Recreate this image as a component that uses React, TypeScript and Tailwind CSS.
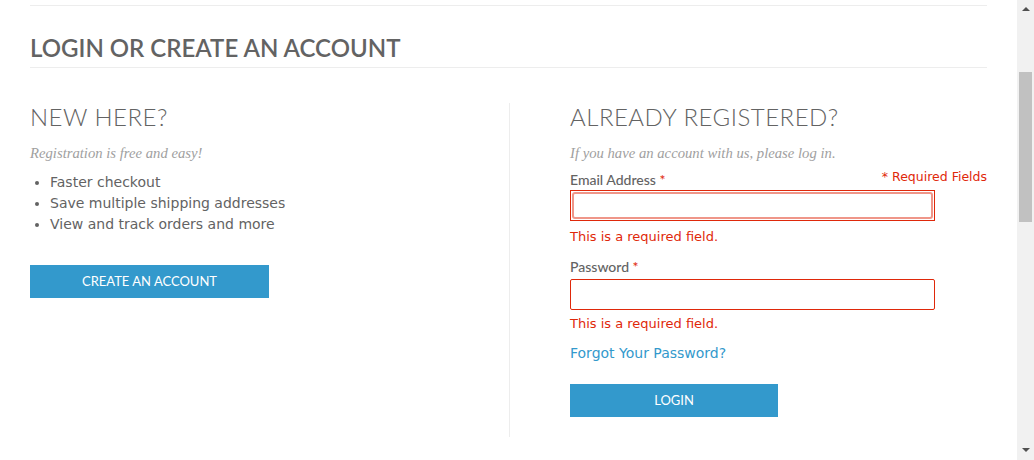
import React from "react";

const headFont = { fontFamily: '"Lato", "Open Sans", sans-serif' };

export default function App() {
  return (
    <div className="flex h-[460px] w-[1034px] overflow-hidden bg-white">
      <main className="flex-1 px-[30px]">
        <div className="h-[6px] border-b border-[#ededed]" />
        <div className="mt-[28px] border-b border-[#ededed] pb-[5px]">
          <h1
            className="text-[24px] leading-[28px] font-semibold uppercase text-[#636363]"
            style={headFont}
          >
            Login or Create an Account
          </h1>
        </div>
        <div className="mt-[35px] flex">
          <section className="w-[480px] border-r border-[#ededed] pb-[20px]">
            <h2
              className="text-[24px] leading-[28px] font-light uppercase tracking-[0.5px] text-[#636363]"
              style={headFont}
            >
              New Here?
            </h2>
            <p className="mt-[13px] text-[14.7px] italic leading-[18px] text-[#a0a0a0] [font-family:'Liberation_Serif',serif]">
              Registration is free and easy!
            </p>
            <ul className="mt-[10px] list-disc pl-[20px] text-[14px] leading-[21px] text-[#636363] [font-family:'DejaVu_Sans',Verdana,sans-serif]">
              <li>Faster checkout</li>
              <li>Save multiple shipping addresses</li>
              <li>View and track orders and more</li>
            </ul>
            <button
              className="mt-[30px] flex h-[33px] w-[239px] items-center justify-center bg-[#3399cc] text-[13px] uppercase text-white"
              style={headFont}
            >
              Create an Account
            </button>
          </section>
          <section className="flex-1 pl-[60px] pb-[20px]">
            <h2
              className="text-[24px] leading-[28px] font-light uppercase tracking-[0.5px] text-[#636363]"
              style={headFont}
            >
              Already Registered?
            </h2>
            <p className="mt-[13px] text-[14.7px] italic leading-[18px] text-[#a0a0a0] [font-family:'Liberation_Serif',serif]">
              If you have an account with us, please log in.
            </p>
            <div className="mt-[2px] flex items-start justify-between">
              <label
                className="mt-[8px] text-[14px] font-medium leading-[16px] text-[#636363]"
                style={headFont}
              >
                Email Address <span className="text-[#df280a]">*</span>
              </label>
              <span className="mt-[5px] text-[12.5px] leading-[16px] text-[#df280a] [font-family:'DejaVu_Sans',Verdana,sans-serif]">
                * Required Fields
              </span>
            </div>
            <div className="mt-[2px] w-[365px] border border-[#df280a] p-px">
              <div className="h-[27px] w-full rounded-[3px] border-2 border-[#ef9689] bg-white" />
            </div>
            <p className="mt-[8px] text-[13px] leading-[16px] text-[#df280a] [font-family:'DejaVu_Sans',Verdana,sans-serif]">
              This is a required field.
            </p>
            <label
              className="mt-[14px] block text-[14px] font-medium leading-[16px] text-[#636363]"
              style={headFont}
            >
              Password <span className="text-[#df280a]">*</span>
            </label>
            <div className="mt-[4px] h-[31px] w-[365px] rounded-[2px] border border-[#df280a] bg-white" />
            <p className="mt-[6px] text-[13px] leading-[16px] text-[#df280a] [font-family:'DejaVu_Sans',Verdana,sans-serif]">
              This is a required field.
            </p>
            <a className="mt-[13px] block text-[14px] leading-[17px] text-[#3399cc] [font-family:'DejaVu_Sans',Verdana,sans-serif]">
              Forgot Your Password?
            </a>
            <button
              className="mt-[22px] flex h-[33px] w-[208px] items-center justify-center bg-[#3399cc] text-[13px] uppercase text-white"
              style={headFont}
            >
              Login
            </button>
          </section>
        </div>
      </main>
      <div className="flex w-[17px] flex-col items-center bg-[#f1f1f1]">
        <div className="mt-[7px] h-0 w-0 border-x-[4px] border-b-[4px] border-x-transparent border-b-[#505050]" />
        <div className="mt-[61px] h-[150px] w-[13px] bg-[#c1c1c1]" />
        <div className="flex-1" />
        <div className="mb-[8px] h-0 w-0 border-x-[4px] border-t-[4px] border-x-transparent border-t-[#505050]" />
      </div>
    </div>
  );
}
